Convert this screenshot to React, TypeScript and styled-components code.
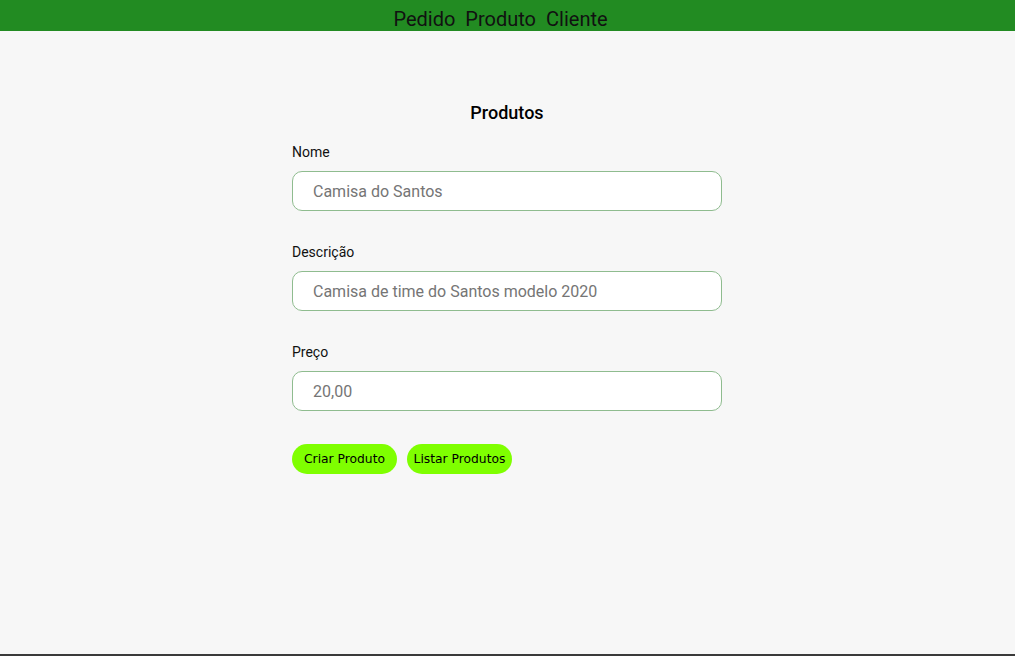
import React from "react";
import styled, { createGlobalStyle } from "styled-components";

const GlobalStyle = createGlobalStyle`
  html, body {
    margin: 0;
    padding: 0;
    background: #f7f7f7;
    font-family: Roboto, "Liberation Sans", sans-serif;
  }
  * { box-sizing: border-box; }
`;

const Page = styled.div`
  height: 656px;
  display: flex;
  flex-direction: column;
  border-bottom: 2px solid #3a3a3a;
`;

const Header = styled.nav`
  height: 31px;
  background: #228b22;
  display: flex;
  justify-content: center;
  align-items: center;
  gap: 10px;
  padding-top: 7px;
  padding-right: 14px;
`;

const NavLink = styled.a`
  font-family: Roboto, sans-serif;
  font-size: 20px;
  color: #111;
  text-decoration: none;
  line-height: 1;
`;

const Main = styled.main`
  flex: 1;
  display: flex;
  justify-content: center;
  padding-top: 70px;
  padding-right: 1px;
`;

const Form = styled.form`
  width: 430px;
  display: flex;
  flex-direction: column;
`;

const Title = styled.h2`
  margin: 0 0 18px;
  text-align: center;
  font-size: 18px;
  font-weight: 500;
  color: #000;
  line-height: 24px;
`;

const Field = styled.div`
  display: flex;
  flex-direction: column;
  margin-bottom: 32px;
`;

const Label = styled.label`
  font-size: 14px;
  color: #111;
  line-height: 18px;
  margin-bottom: 10px;
`;

const Input = styled.input`
  height: 40px;
  border: 1px solid #8fbc8f;
  border-radius: 10px;
  background: #fff;
  padding: 0 20px;
  font-family: Roboto, sans-serif;
  font-size: 16px;
  outline: none;
  &::placeholder { color: #757575; }
`;

const Actions = styled.div`
  display: flex;
  gap: 10px;
  margin-top: 1px;
`;

const Button = styled.button`
  height: 30px;
  width: 105px;
  border: none;
  border-radius: 15px;
  background: #7fff00;
  font-family: "DejaVu Sans", Verdana, sans-serif;
  font-size: 12.3px;
  color: #000;
  padding: 0;
  cursor: pointer;
`;

const fields = [
  { label: "Nome", placeholder: "Camisa do Santos" },
  { label: "Descrição", placeholder: "Camisa de time do Santos modelo 2020" },
  { label: "Preço", placeholder: "20,00" },
];

export default function App() {
  return (
    <>
      <GlobalStyle />
      <Page>
        <Header>
          <NavLink href="#">Pedido</NavLink>
          <NavLink href="#">Produto</NavLink>
          <NavLink href="#">Cliente</NavLink>
        </Header>
        <Main>
          <Form onSubmit={(e) => e.preventDefault()}>
            <Title>Produtos</Title>
            {fields.map((f) => (
              <Field key={f.label}>
                <Label>{f.label}</Label>
                <Input placeholder={f.placeholder} />
              </Field>
            ))}
            <Actions>
              <Button type="submit">Criar Produto</Button>
              <Button type="button">Listar Produtos</Button>
            </Actions>
          </Form>
        </Main>
      </Page>
    </>
  );
}
